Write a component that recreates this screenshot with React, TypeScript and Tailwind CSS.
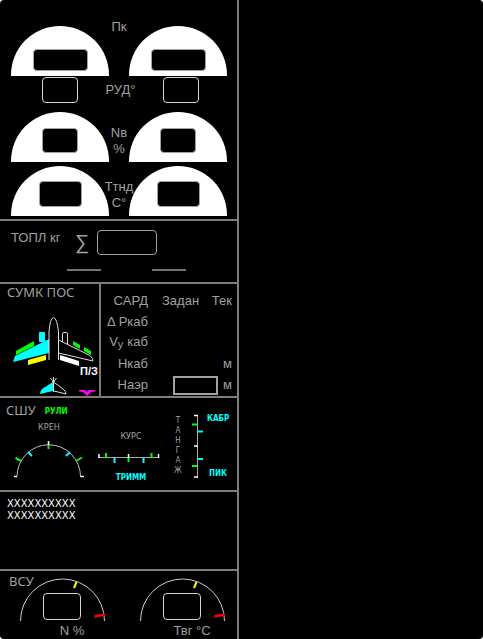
import type { ReactNode } from "react";

const sans = "font-['Liberation_Sans',Arial,sans-serif]";
const wide = "font-['Noto_Sans',sans-serif]";
const narrow = "font-['DejaVu_Sans_Condensed','Noto_Sans',sans-serif]";

function Dial({ size }: { size: string }) {
  return (
    <div className="flex h-[50px] w-[98px] justify-center rounded-t-full bg-white">
      <output className={`rounded border border-neutral-400 bg-black ${size}`} />
    </div>
  );
}

function DialRow({ size, children }: { size: string; children: ReactNode }) {
  return (
    <div className="flex items-end justify-between">
      <Dial size={size} />
      <div className="flex w-5 flex-col items-center pb-[5px] text-[13px] leading-4 whitespace-nowrap">
        {children}
      </div>
      <Dial size={size} />
    </div>
  );
}

function Engines() {
  return (
    <section className={`border-b-2 border-[#7c7c7c] pt-[18px] pr-[10px] pb-[3px] pl-[11px] ${sans}`}>
      <div className="flex justify-between">
        <div className="pt-2">
          <Dial size="mt-[23px] h-[22px] w-[55px]" />
        </div>
        <div className="pt-px text-[13px] leading-4">Пк</div>
        <div className="pt-2">
          <Dial size="mt-[23px] h-[22px] w-[55px]" />
        </div>
      </div>
      <div className="mb-[9px] flex items-center justify-between pt-px pr-7 pl-[31px]">
        <output className="h-[26px] w-9 rounded border border-neutral-300" />
        <span className="text-[13px] leading-4">РУД°</span>
        <output className="h-[26px] w-9 rounded border border-neutral-300" />
      </div>
      <div className="flex flex-col gap-1">
        <DialRow size="mt-4 h-[25px] w-9">
          <span>Nв</span>
          <span>%</span>
        </DialRow>
        <DialRow size="mt-[15px] h-[26px] w-[43px]">
          <span>Ттнд</span>
          <span>C°</span>
        </DialRow>
      </div>
    </section>
  );
}

function Fuel() {
  return (
    <section className={`border-b-2 border-[#7c7c7c] pt-[9px] pb-[11px] text-[13px] ${sans}`}>
      <div className="flex pl-[11px]">
        <span className="w-16 leading-4">ТОПЛ кг</span>
        <span className="w-[22px] font-['DejaVu_Sans',sans-serif] text-xl leading-6 font-extralight">∑</span>
        <output aria-label="ТОПЛ кг" className="h-[25px] w-[60px] rounded border border-neutral-400" />
      </div>
      <div className="mt-[14px] flex justify-between pr-[51px] pl-[67px]">
        <div className="h-0.5 w-[34px] bg-neutral-500" />
        <div className="h-0.5 w-[34px] bg-neutral-500" />
      </div>
    </section>
  );
}

function AircraftDrawing() {
  return (
    <svg viewBox="0 314 99 82" className="block h-[82px] w-[99px]" fill="none">
      <path d="M15 356 L49 339 V353 L13 362 Z M39 333 q0-1 1-1 h4 q1 0 1 1 v9 h-6z" fill="#00ffff" />
      <path d="M16 351 L34 341 V346 L16 355 Z M73 341 L80 345 V349 L73 345 Z M84 347 L91 351 V355 L84 351 Z" fill="#00ff00" />
      <path d="M28 360 L46 355 V360 L28 365 Z" fill="#ffff00" />
      <path d="M60 355 L79 361 V366 L60 360 Z" fill="#fff" />
      <g stroke="#ddd" strokeWidth="1">
        <path d="M49 360 V332 Q50 318 53.5 317.500 Q57 318 58.500 332 V360" />
        <path d="M58.500 340 L90 355.500 Q93 358 93 361 L58.500 353" />
        <path d="M62.500 342 V334 Q62.500 332.500 64 332.500 H66 Q67.500 332.500 67.500 334 V344" />
        <path d="M50.500 378 Q53 380 53.500 385 Q54 380 56.500 378 M53.500 377 V392 M55 383 L63 389 Q66 391 66 394 L54 391" />
      </g>
      <path d="M53 382 V391 L40 394 Q40 391 42 389 Z" fill="#00ffff" />
      <path d="M79 390 H85 L87 392 L89 390 H95 V391.500 L91 392 L87 396 L83 392 L79 391.500 Z" fill="#ff00ff" />
      <text x="80" y="375" fill="#fff" className="font-['Liberation_Sans',Arial,sans-serif] text-[11px] font-bold">
        П/З
      </text>
    </svg>
  );
}

function Cabin() {
  return (
    <section className="flex border-b-2 border-[#7c7c7c]">
      <div className="w-[101px] border-r-2 border-[#7c7c7c]">
        <h2 className={`pl-[7px] text-[13px] leading-4 whitespace-nowrap ${wide}`}>СУМК ПОС</h2>
        <div className="pt-[14px]">
          <AircraftDrawing />
        </div>
      </div>
      <table className={`mt-[6px] ml-[5px] text-[13px] leading-4 ${sans}`}>
        <colgroup>
          <col className="w-[42px]" />
          <col className="w-[70px]" />
          <col className="w-[14px]" />
        </colgroup>
        <thead>
          <tr className="h-[21px]">
            <th className="p-0 text-right font-normal">САРД</th>
            <th className="py-0 pr-0 pl-[14px] text-left font-normal">Задан</th>
            <th className="p-0 font-normal">
              <div className="flex w-[14px] justify-end">Тек</div>
            </th>
          </tr>
        </thead>
        <tbody>
          <tr className="h-[21px]">
            <th className="p-0 text-right font-normal whitespace-nowrap">Δ Ркаб</th>
            <td />
            <td />
          </tr>
          <tr className="h-[21px]">
            <th className="p-0 font-normal whitespace-nowrap">
              <div className="flex justify-end">
                V<span className="pt-0.5 pr-1 text-[11px]">y</span>каб
              </div>
            </th>
            <td />
            <td />
          </tr>
          <tr className="h-[21px]">
            <th className="p-0 text-right font-normal">Нкаб</th>
            <td />
            <td className="p-0 text-right">м</td>
          </tr>
          <tr className="h-[21px]">
            <th className="p-0 text-right font-normal">Наэр</th>
            <td className="p-0">
              <input
                aria-label="Наэр"
                className="ml-auto block h-[19px] w-[45px] border-2 border-neutral-400 bg-black px-0.5 text-right"
              />
            </td>
            <td className="p-0 text-right">м</td>
          </tr>
        </tbody>
      </table>
    </section>
  );
}

function Controls() {
  return (
    <section className={`flex h-[94px] border-b-2 border-[#7c7c7c] text-[9px] leading-3 ${narrow}`}>
      <div className="w-[98px]">
        <div className="flex items-end gap-[9px] pt-1 pl-[6px]">
          <h2 className={`text-[13px] leading-4 ${wide}`}>СШУ</h2>
          <span className="text-[8px] font-bold text-[#00ff00]">РУЛИ</span>
        </div>
        <div className="w-[98px] pt-[3px] text-center">КРЕН</div>
        <svg viewBox="12 438 74 40" className="mt-[6px] ml-3 block h-10 w-[74px]" fill="none">
          <path d="M14 475.500 H17 A31.500 31.500 0 0 1 80.500 475.500 H84" stroke="#bbb" />
          <path d="M14 475.500 H17 M80.500 475.500 H84 M48.500 440 V444" stroke="#fff" strokeWidth="1.500" />
          <path d="M48.500 444 V448 M15.500 457 L21 460 M76 460 L82 456.500" stroke="#00ff00" strokeWidth="2" />
          <path d="M28 451 L32 455 M70 451 L66 455" stroke="#00ffff" strokeWidth="2" />
        </svg>
      </div>
      <div className="flex w-[62px] flex-col items-center pt-[32px]">
        <span className="pl-1">КУРС</span>
        <svg viewBox="98 451 62 13" className="mt-[9px] block h-[13px] w-[62px]" fill="none">
          <path d="M98 457.500 H159" stroke="#aaa" />
          <path d="M99 454 V458 M158.500 454 V458 M128.500 454 V458" stroke="#fff" strokeWidth="1.500" />
          <path d="M106 453 V458 M151.500 453 V458 M128.500 458 V462" stroke="#00ff00" strokeWidth="2" />
          <path d="M114.500 458 V463 M143.500 458 V463" stroke="#00ffff" strokeWidth="2" />
        </svg>
        <span className="mt-2 pl-1 text-[8px] font-bold text-[#00ffff]">ТРИММ</span>
      </div>
      <div className="flex w-[30px] flex-col items-center pt-[18px] pl-[6px] text-[8px] leading-[10px]">
        {"ТАНГАЖ".split("").map((letter, i) => (
          <span key={i}>{letter}</span>
        ))}
      </div>
      <svg viewBox="190 414 14 65" className="mt-4 block h-[65px] w-[14px]" fill="none">
        <path d="M197.500 415 V477.500" stroke="#aaa" />
        <path d="M194 415.500 H198 M194 446 H198 M194 477 H198" stroke="#fff" strokeWidth="1.500" />
        <path d="M192 424.500 H197 M192 466 H197" stroke="#00ff00" strokeWidth="2" />
        <path d="M198 431.500 H203 M198 459 H203" stroke="#00ffff" strokeWidth="2" />
      </svg>
      <div className="flex flex-col justify-between pt-[15px] pb-[10px] pl-[3px] text-[8px] font-bold text-[#00ffff]">
        <span>КАБР</span>
        <span className="pl-0.5">ПИК</span>
      </div>
    </section>
  );
}

function Messages() {
  return (
    <section className="h-[79px] border-b-2 border-[#7c7c7c] pt-[6px] pl-[7px] font-['DejaVu_Sans',sans-serif] text-[10px] leading-3 text-white">
      <p>XXXXXXXXXX</p>
      <p>XXXXXXXXXX</p>
    </section>
  );
}

function ApuGauge({ label }: { label: string }) {
  return (
    <div className="flex w-[88px] flex-col items-center">
      <div className="grid">
        <svg viewBox="18 577 88 46" className="col-start-1 row-start-1 block h-[46px] w-[88px]" fill="none">
          <path d="M20.500 621 A42 42 0 0 1 104.500 621" stroke="#ccc" />
          <path d="M76.500 582 L74 588" stroke="#ffff00" strokeWidth="2" />
          <path d="M94.500 616.500 L105 614.500" stroke="#ff0000" strokeWidth="2.500" />
        </svg>
        <output
          aria-label={label}
          className="col-start-1 row-start-1 mb-[3px] h-[27px] w-[38px] place-self-end justify-self-center rounded border border-neutral-300"
        />
      </div>
      <span className="pl-5 text-[13px] leading-4">{label}</span>
    </div>
  );
}

function Apu() {
  return (
    <section className={`flex pt-0.5 pl-[9px] ${sans}`}>
      <h2 className={`w-[9px] text-[13px] leading-4 ${wide}`}>ВСУ</h2>
      <div className="flex gap-8 pt-1">
        <ApuGauge label="N %" />
        <ApuGauge label="Твг °C" />
      </div>
    </section>
  );
}

export default function App() {
  return (
    <div className="min-h-screen bg-white">
      <main className="min-h-screen overflow-hidden rounded bg-black text-[#a0a0a0]">
        <div className="min-h-screen w-[239px] border-r-2 border-[#7c7c7c]">
          <Engines />
          <Fuel />
          <Cabin />
          <Controls />
          <Messages />
          <Apu />
        </div>
      </main>
    </div>
  );
}
